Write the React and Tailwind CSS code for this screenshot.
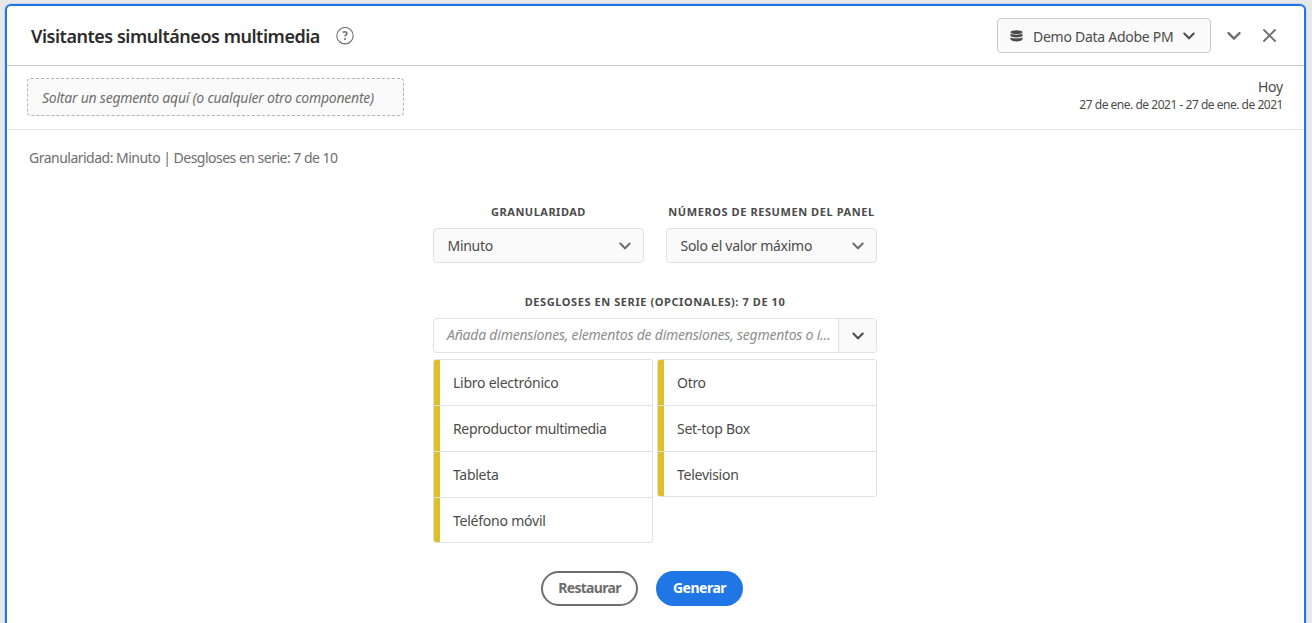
import React from "react";

function Chevron({ className = "", size = 12 }) {
  return (
    <svg width={size} height={size} viewBox="0 0 12 12" fill="none" className={`shrink-0 ${className}`}>
      <path d="M1.3 3.5 6 8.300l4.700-4.800" stroke="currentColor" strokeWidth="2" strokeLinecap="round" strokeLinejoin="miter" />
    </svg>
  );
}

function Field({ label, labelClass, value, valueClass }) {
  return (
    <div className="w-[211px]">
      <div className="flex h-4 items-center justify-center whitespace-nowrap text-[11px] font-bold text-[#4b4b4b]">
        <span className={labelClass}>{label}</span>
      </div>
      <button className="mt-2 flex h-[35px] w-full items-center justify-between rounded-[4px] border border-[#e1e1e1] bg-[#fafafa] pl-[13.5px] pr-[12.5px] text-[#4b4b4b]">
        <span className={valueClass}>{value}</span>
        <Chevron className="text-[#6e6e6e]" />
      </button>
    </div>
  );
}

function Breakdowns({ items }) {
  return (
    <ul className="w-[220px] self-start overflow-hidden rounded-[3px] border border-[#e1e1e1]">
      {items.map(([text, cls]) => (
        <li key={text} className="flex h-[46px] items-center border-b border-[#e1e1e1] last:h-[44px] last:border-b-0">
          <span className="h-full w-1.5 bg-[#dfbf28]" />
          <span className={`ml-[13px] whitespace-nowrap ${cls}`}>{text}</span>
        </li>
      ))}
    </ul>
  );
}

export default function App() {
  return (
    <div className="h-[623px] overflow-hidden bg-[#e8e8e8] pl-[5px] pr-1.5 pt-1 font-['Noto_Sans','Open_Sans',sans-serif] text-[14px] text-[#4b4b4b]">
      <section className="h-[640px] rounded-[6px] border-2 border-[#1f76e4] bg-white shadow-[0_0_0_1px_#c9d6e6]">
        <header className="flex h-[60px] items-center border-b border-[#cacaca] pl-6 pr-7">
          <h1 className="whitespace-nowrap pt-px text-[18px] font-semibold tracking-[-0.47px] text-[#2c2c2c]">
            Visitantes simultáneos multimedia
          </h1>
          <svg width="18" height="18" viewBox="0 0 18 18" fill="none" className="ml-4 shrink-0 text-[#6e6e6e]">
            <circle cx="9" cy="8.700" r="8.2" stroke="currentColor" strokeWidth="1.1" />
            <path d="M6.800 5.500c.7-.6 1.400-.8 2.100-.8 1.200 0 2 .6 2 1.700 0 1.400-1.900 1.700-1.900 3.200" stroke="currentColor" strokeWidth="1.6" />
            <circle cx="9" cy="12" r="1.1" fill="currentColor" />
          </svg>
          <button className="ml-auto flex h-[35px] w-[214px] items-center whitespace-nowrap rounded-[4px] border border-[#cacaca] bg-[#fafafa] pl-3">
            <svg width="13" height="12" viewBox="0 0 13 12" className="shrink-0" fill="#4b4b4b">
              <ellipse cx="6.5" cy="2.200" rx="6" ry="1.900" />
              <path d="M.5 3.600c1.500 1.500 10.500 1.500 12 0v2.500c-1.500 1.900-10.500 1.900-12 0z" />
              <path d="M.5 7.200c1.500 1.600 10.500 1.600 12 0v2.400c-1.500 2.500-10.500 2.500-12 0z" />
            </svg>
            <span className="ml-2.5 w-[140px] pt-0.5 tracking-[-0.27px]">Demo Data Adobe PM</span>
            <Chevron className="ml-2.5" />
          </button>
          <Chevron size={14} className="ml-4 text-[#6e6e6e]" />
          <svg width="13" height="13" viewBox="0 0 13 13" className="ml-[22px] shrink-0 text-[#6e6e6e]">
            <path d="M1 1l11 11M12 1 1 12" stroke="currentColor" strokeWidth="1.8" strokeLinecap="round" />
          </svg>
        </header>

        <div className="flex h-16 items-start justify-between border-b border-[#eaeaea] pl-5 pr-[21px] pt-3">
          <div className="flex h-[38px] w-[377px] items-center whitespace-nowrap rounded-[4px] border border-dashed border-[#b3b3b3] bg-[#fafafa] pl-3.5 italic text-[#6e6e6e]">
            <span className="tracking-[-0.24px]">Soltar un segmento aquí (o cualquier otro componente)</span>
          </div>
          <div className="whitespace-nowrap text-right">
            <div className="leading-[18px] tracking-[-0.2px]">Hoy</div>
            <div className="text-[12px] leading-[17px] tracking-[-0.48px]">27 de ene. de 2021 - 27 de ene. de 2021</div>
          </div>
        </div>

        <p className="pl-[22px] pt-[18px] leading-5 tracking-[-0.51px] text-[#6e6e6e]">
          Granularidad: Minuto | Desgloses en serie: 7 de 10
        </p>

        <div className="ml-[426px] mt-9 w-[444px]">
          <div className="flex justify-between">
            <Field label="GRANULARIDAD" labelClass="tracking-[0.5px]" value="Minuto" valueClass="tracking-[-0.3px]" />
            <Field label="NÚMEROS DE RESUMEN DEL PANEL" labelClass="tracking-[0.58px]" value="Solo el valor máximo" valueClass="tracking-[-0.27px]" />
          </div>
          <div className="mt-[31px] flex h-4 items-center justify-center whitespace-nowrap text-[11px] font-bold">
            <span className="tracking-[0.58px]">DESGLOSES EN SERIE (OPCIONALES): 7 DE 10</span>
          </div>
          <div className="mt-2 flex h-[35px] overflow-hidden rounded-[4px] border border-[#e1e1e1]">
            <div className="flex flex-1 items-center whitespace-nowrap pb-0.5 pl-[13px] italic text-[#8e8e8e]">
              <span className="tracking-[-0.21px]">Añada dimensiones, elementos de dimensiones, segmentos o i…</span>
            </div>
            <button className="flex w-[38px] shrink-0 items-center justify-center border-l border-[#e1e1e1] bg-[#fafafa]">
              <Chevron />
            </button>
          </div>
          <div className="mt-1.5 flex h-[184px] justify-between">
            <Breakdowns items={[
              ["Libro electrónico", "tracking-[-0.25px]"],
              ["Reproductor multimedia", "tracking-[-0.35px]"],
              ["Tableta", "tracking-[-0.3px]"],
              ["Teléfono móvil", "tracking-[-0.23px]"],
            ]} />
            <Breakdowns items={[
              ["Otro", "tracking-[-0.3px]"],
              ["Set-top Box", "tracking-[-0.25px]"],
              ["Television", "tracking-[-0.25px]"],
            ]} />
          </div>
          <div className="ml-[108px] mt-7 flex gap-[18px] font-bold">
            <button className="flex h-[35px] w-[97px] items-center justify-center rounded-full border-2 border-[#6e6e6e] pb-0.5 text-[#6e6e6e]">
              <span className="tracking-[-0.7px]">Restaurar</span>
            </button>
            <button className="flex h-[35px] w-[87px] items-center justify-center rounded-full bg-[#1f76e4] pb-0.5 text-white">
              <span className="tracking-[-0.5px]">Generar</span>
            </button>
          </div>
        </div>
      </section>
    </div>
  );
}
